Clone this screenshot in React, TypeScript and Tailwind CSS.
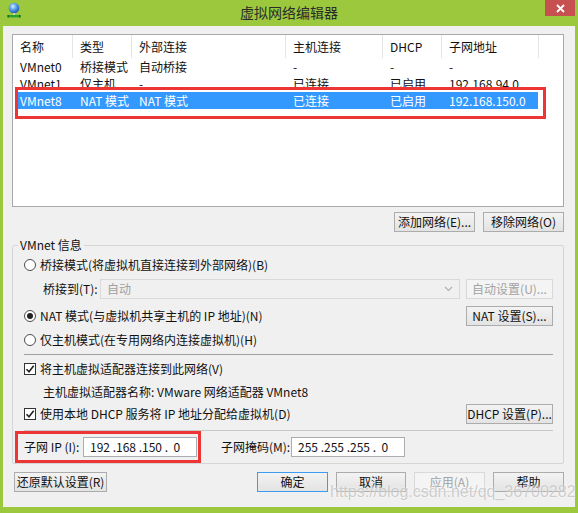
import React from 'react';

const cols = [
  { label: '名称', w: 'w-[60px]' },
  { label: '类型', w: 'w-[59px]' },
  { label: '外部连接', w: 'w-[154px]' },
  { label: '主机连接', w: 'w-[97px]' },
  { label: 'DHCP', w: 'w-[59px]' },
  { label: '子网地址', w: 'w-[97px]' },
];

const rows = [
  ['VMnet0', '桥接模式', '自动桥接', '-', '-', '-'],
  ['VMnet1', '仅主机...', '-', '已连接', '已启用', '192.168.94.0'],
  ['VMnet8', 'NAT 模式', 'NAT 模式', '已连接', '已启用', '192.168.150.0'],
];

function Button({
  children,
  w,
  disabled,
  primary,
}: {
  children: React.ReactNode;
  w: string;
  disabled?: boolean;
  primary?: boolean;
}) {
  const base = 'h-[20px] flex items-center justify-center text-[12px] leading-none border ';
  if (disabled) {
    return (
      <div className={base + w + ' bg-[#f4f4f4] border-[#d9d9d9] text-[#a3a3a3]'}>{children}</div>
    );
  }
  return (
    <div
      className={
        base +
        w +
        ' bg-gradient-to-b from-[#f3f3f3] to-[#e3e3e3] text-[#111] ' +
        (primary ? 'border-[#3c9cf2]' : 'border-[#acacac]')
      }
    >
      {children}
    </div>
  );
}

function Radio({ checked }: { checked?: boolean }) {
  return (
    <div className="w-[12px] h-[12px] rounded-full border border-[#4d4d4d] bg-white flex items-center justify-center shrink-0">
      {checked && <div className="w-[6px] h-[6px] rounded-full bg-[#222]" />}
    </div>
  );
}

function Check() {
  return (
    <div className="w-[12px] h-[12px] border border-[#333] bg-white flex items-center justify-center shrink-0">
      <svg width="10" height="10" viewBox="0 0 10 10">
        <path d="M1.5 5.2 L4 7.8 L8.7 1.8" fill="none" stroke="#222" strokeWidth="1.6" />
      </svg>
    </div>
  );
}

function GlobeIcon() {
  return (
    <svg width="16" height="16" viewBox="0 0 16 16">
      <defs>
        <radialGradient id="g" cx="0.4" cy="0.35" r="0.7">
          <stop offset="0" stopColor="#d6ecff" />
          <stop offset="0.5" stopColor="#4f9be8" />
          <stop offset="1" stopColor="#1c4fa8" />
        </radialGradient>
      </defs>
      <circle cx="7" cy="6" r="5.3" fill="url(#g)" />
      <rect x="6.2" y="11" width="1.6" height="2" fill="#d8d8d8" />
      <rect x="0.5" y="13" width="13" height="2.4" fill="#2aa12a" />
      <rect x="0.5" y="13" width="1.5" height="2.4" fill="#1a6b1a" />
      <rect x="12" y="13" width="1.5" height="2.4" fill="#1a6b1a" />
    </svg>
  );
}

export default function App() {
  return (
    <div className="w-[578px] h-[513px] bg-[#9cc83d] flex flex-col font-['Noto_Sans_CJK_SC',sans-serif] text-[12px] text-[#111] leading-none">
      {/* Title bar */}
      <div className="h-[26px] grid grid-cols-[1fr_auto_1fr] items-start shrink-0">
        <div className="pl-[7px] pt-[2px]">
          <GlobeIcon />
        </div>
        <div className="pt-[3px] text-[14px] leading-[18px] text-[#2b2b2b]">虚拟网络编辑器</div>
        <div className="flex justify-end pr-[3px]">
          <div className="w-[30px] h-[16px] bg-[#c75050] flex items-center justify-center">
            <svg width="9" height="9" viewBox="0 0 9 9">
              <path d="M1 1 L8 8 M8 1 L1 8" stroke="white" strokeWidth="1.8" />
            </svg>
          </div>
        </div>
      </div>

      {/* Client area */}
      <div className="relative mx-[3px] mb-[6px] flex-1 bg-[#f0f0f0] pl-[9px] pr-[11px] pt-[8px] flex flex-col">
        {/* Network list */}
        <div className="h-[173px] bg-white border border-[#a9a9a9] shrink-0">
          <div className="flex h-[23px] items-center">
            {cols.map((c) => (
              <div
                key={c.label}
                className={c.w + ' h-full flex items-center pl-[7px] border-r border-[#e5e5e5]'}
              >
                {c.label}
              </div>
            ))}
          </div>
          {rows.map((r, i) => (
            <div
              key={r[0]}
              className={
                'flex h-[17px] items-center ' + (i === 2 ? 'ml-[4px] w-[521px] bg-[#3399ff] text-white' : '')
              }
            >
              {r.map((cell, j) => (
                <div
                  key={j}
                  className={
                    cols[j].w + ' shrink-0 ' + (i === 2 && j === 0 ? 'pl-[3px] !w-[56px]' : 'pl-[7px]')
                  }
                >
                  {cell}
                </div>
              ))}
            </div>
          ))}
        </div>

        {/* Add / remove */}
        <div className="flex justify-end gap-[8px] mt-[5px] shrink-0">
          <Button w="w-[81px]">添加网络(E)...</Button>
          <Button w="w-[81px]">移除网络(O)</Button>
        </div>

        {/* VMnet info */}
        <fieldset className="mt-[6px] border border-[#d5d5d5] rounded-[2px] pl-[11px] pr-[10px] pb-[11px] h-[226px]">
          <legend className="-ml-[6px] px-[2px] leading-[14px]">VMnet 信息</legend>
          <div className="flex flex-col">
            <div className="h-[20px] flex items-center gap-[4px] mt-[3px]">
              <Radio />
              <span>桥接模式(将虚拟机直接连接到外部网络)(B)</span>
            </div>
            <div className="h-[20px] flex items-center mt-[4px] pl-[19px]">
              <span className="w-[57px]">桥接到(T):</span>
              <div className="w-[360px] h-[20px] border border-[#d9d9d9] bg-[#f0f0f0] flex items-center justify-between pl-[6px] pr-[6px] text-[#a0a0a0]">
                <span>自动</span>
                <svg width="9" height="6" viewBox="0 0 9 6">
                  <path d="M1 1 L4.5 4.5 L8 1" fill="none" stroke="#b0b0b0" strokeWidth="1.2" />
                </svg>
              </div>
              <div className="ml-auto">
                <Button w="w-[87px]" disabled>
                  自动设置(U)...
                </Button>
              </div>
            </div>
            <div className="h-[21px] flex items-center gap-[4px] mt-[6px]">
              <Radio checked />
              <span>NAT 模式(与虚拟机共享主机的 IP 地址)(N)</span>
              <div className="ml-auto">
                <Button w="w-[87px]">NAT 设置(S)...</Button>
              </div>
            </div>
            <div className="h-[20px] flex items-center gap-[4px] mt-[4px]">
              <Radio />
              <span>仅主机模式(在专用网络内连接虚拟机)(H)</span>
            </div>
            <div className="h-px bg-[#a0a0a0] mt-[4px]" />
            <div className="h-[18px] flex items-center gap-[4px] mt-[5px]">
              <Check />
              <span>将主机虚拟适配器连接到此网络(V)</span>
            </div>
            <div className="h-[18px] flex items-center pl-[19px] mt-[5px]">
              主机虚拟适配器名称: VMware 网络适配器 VMnet8
            </div>
            <div className="h-[21px] flex items-center gap-[4px] mt-[2px]">
              <Check />
              <span>使用本地 DHCP 服务将 IP 地址分配给虚拟机(D)</span>
              <div className="ml-auto">
                <Button w="w-[87px]">DHCP 设置(P)...</Button>
              </div>
            </div>
            <div className="h-px bg-[#c8c8c8] mt-[6px]" />
            <div className="h-[20px] flex items-center mt-[6px]">
              <span className="w-[59px]">子网 IP (I):</span>
              <div className="w-[114px] h-[20px] bg-white border border-[#abadb3] flex items-center pl-[6px] whitespace-pre">
                192 .168 .150 .  0
              </div>
              <span className="ml-[24px] w-[70px]">子网掩码(M):</span>
              <div className="w-[114px] h-[20px] bg-white border border-[#abadb3] flex items-center pl-[6px] whitespace-pre">
                255 .255 .255 .  0
              </div>
            </div>
          </div>
        </fieldset>

        {/* Bottom buttons */}
        <div className="flex items-center mt-[8px] pl-[2px] pr-[0px]">
          <Button w="w-[93px]">还原默认设置(R)</Button>
          <div className="ml-auto flex gap-[8px]">
            <Button w="w-[71px]" primary>
              确定
            </Button>
            <Button w="w-[70px]">取消</Button>
            <Button w="w-[71px]" disabled>
              应用(A)
            </Button>
            <Button w="w-[71px]">帮助</Button>
          </div>
        </div>

        {/* Annotation boxes */}
        <div className="absolute left-[12px] top-[61px] w-[531px] h-[32px] border-[3px] border-[#ee3535]" />
        <div className="absolute left-[12px] top-[405px] w-[186px] h-[32px] border-[3px] border-[#ee3535]" />

        {/* Watermark */}
        <div className="absolute left-[327px] top-[456px] font-['Liberation_Sans',sans-serif] text-[16px] leading-[20px] text-[#a8a8a8]/55 [text-shadow:0_0_2px_#ffffff]">
          https://blog.csdn.net/qq_36700282
        </div>
      </div>
    </div>
  );
}
